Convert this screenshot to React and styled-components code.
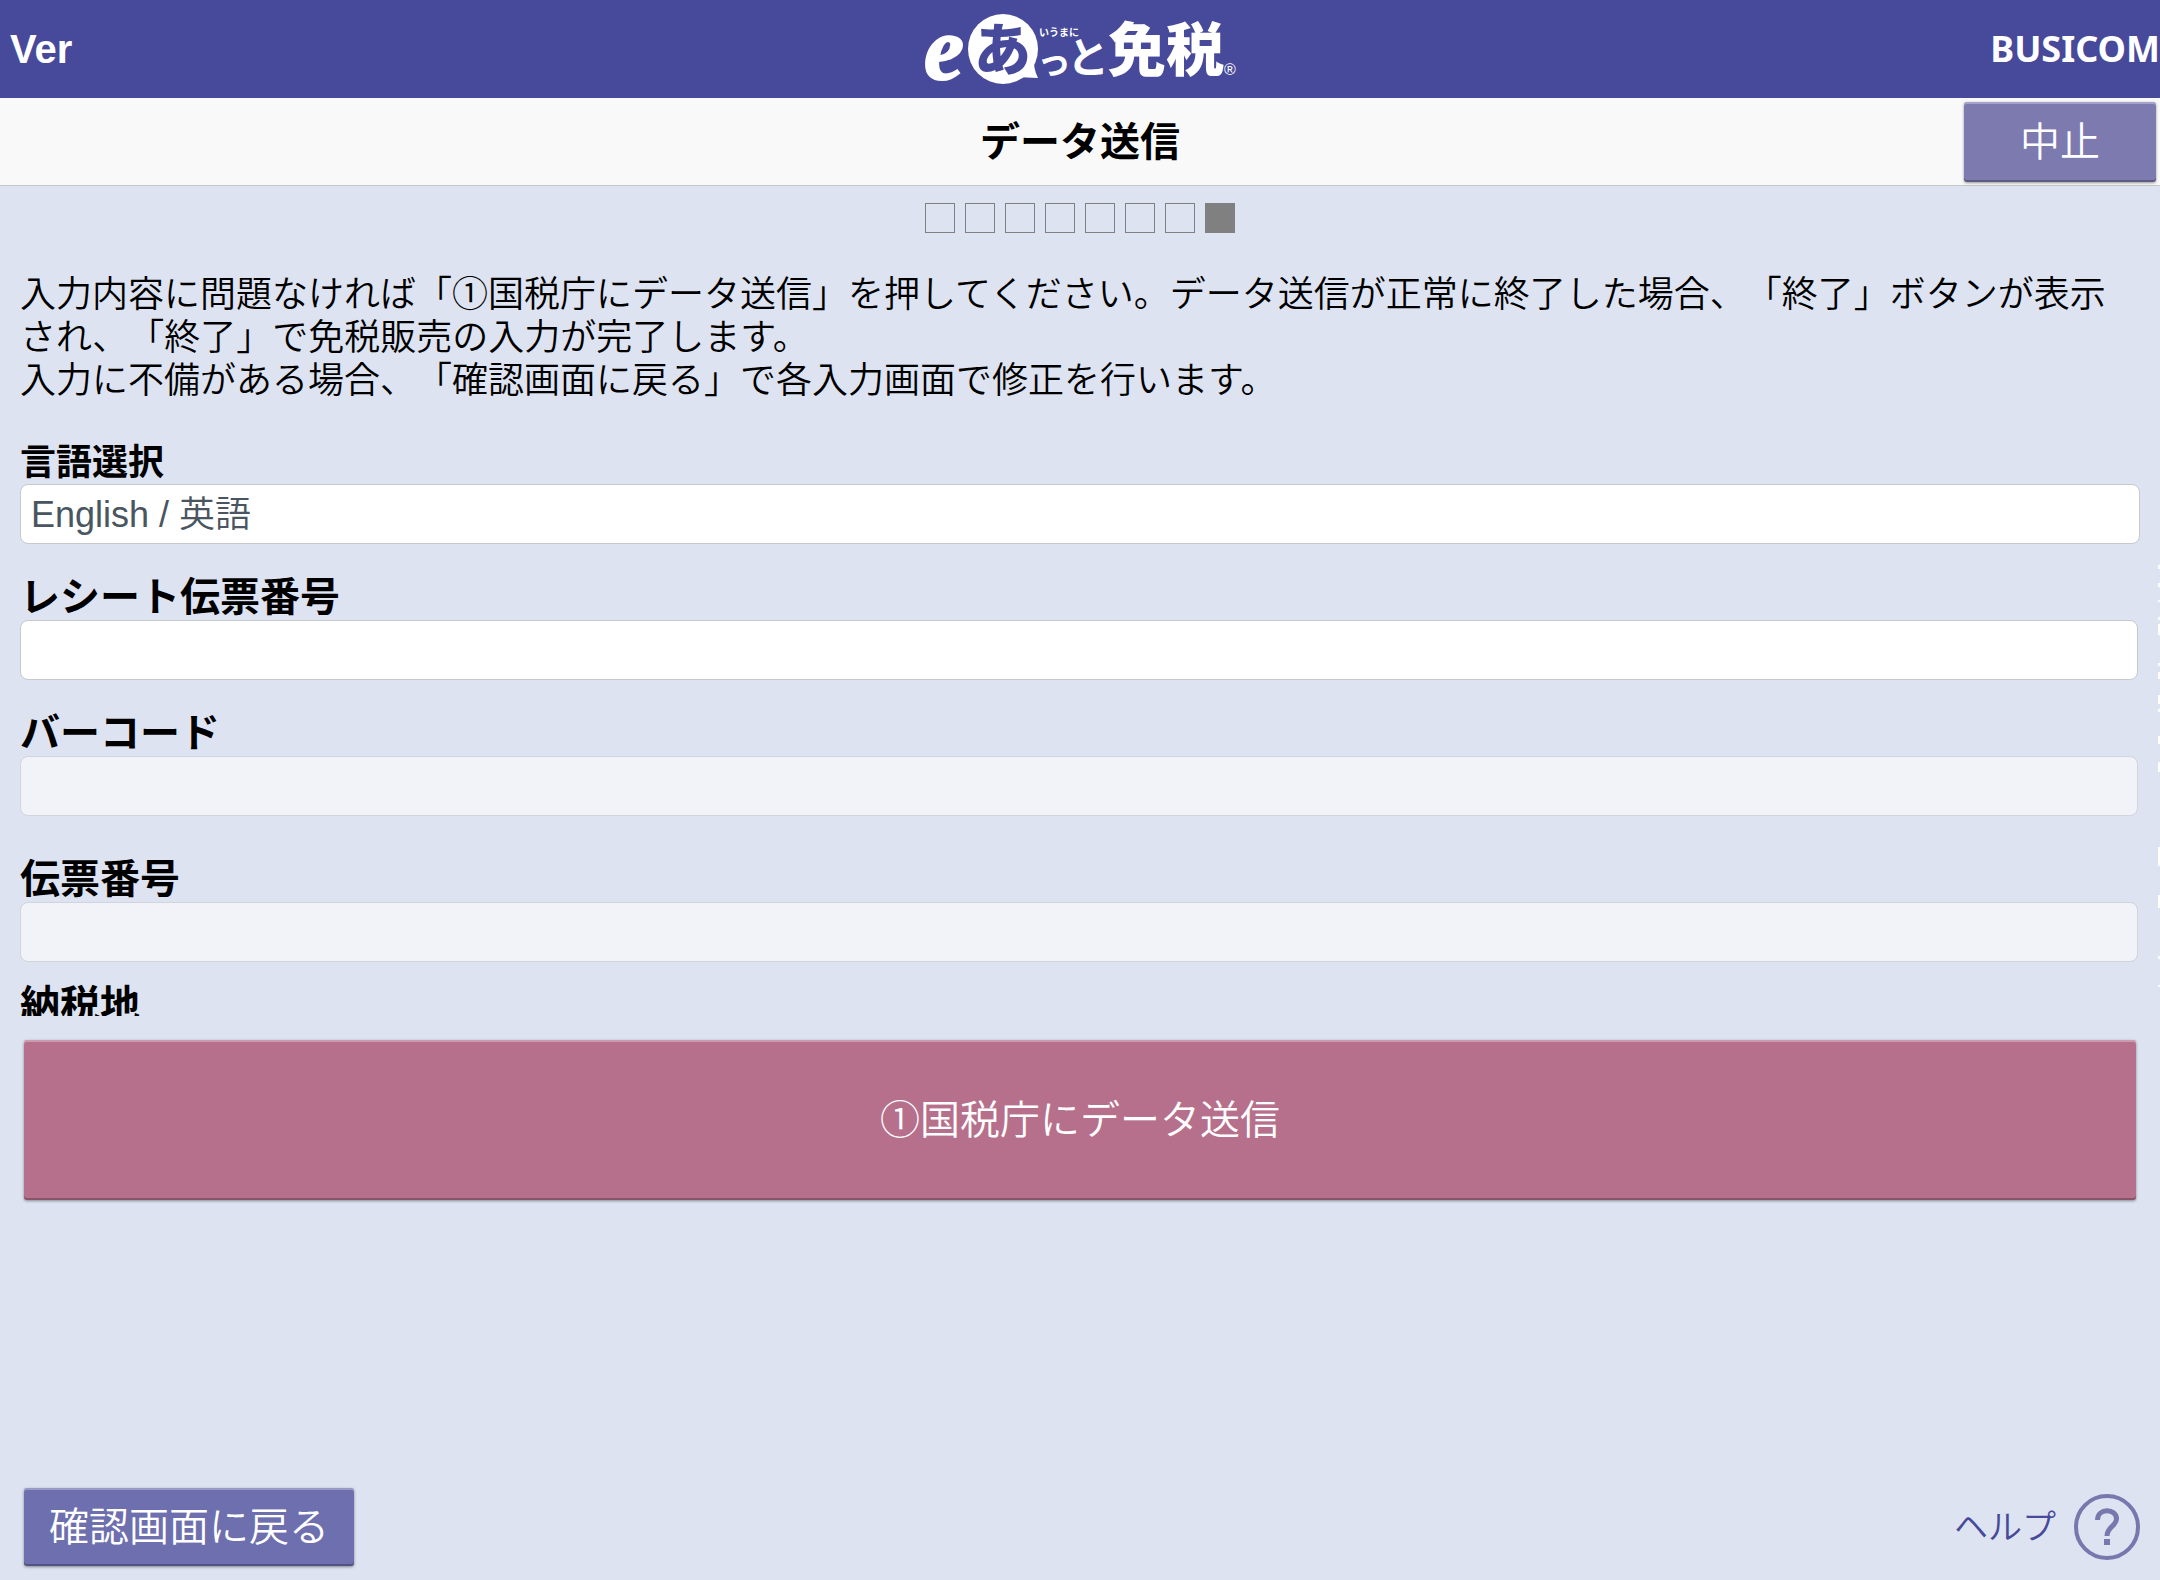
import React, { useState } from 'react';
import styled, { createGlobalStyle } from 'styled-components';

const STEPS = 8;

const App = () => {
    const [receiptNo, setReceiptNo] = useState('');

    return (
        <>
            <GlobalStyle />
            <Page>
                <Header>
                    <Version>Ver</Version>
                    <Logo />
                    <Brand>BUSICOM</Brand>
                </Header>

                <TitleBar>
                    <Title>データ送信</Title>
                    <CancelButton type="button">中止</CancelButton>
                </TitleBar>

                <Steps>
                    {Array.from({ length: STEPS }, (_, i) => (
                        <Step key={i} $current={i === STEPS - 1} />
                    ))}
                </Steps>

                <Main>
                    <Form>
                        <Message>
                            入力内容に問題なければ「①国税庁にデータ送信」を押してください。データ送信が正常に終了した場合、「終了」ボタンが表示され、「終了」で免税販売の入力が完了します。
                            <br />
                            入力に不備がある場合、「確認画面に戻る」で各入力画面で修正を行います。
                        </Message>

                        <Field>
                            <Label htmlFor="language" $small>言語選択</Label>
                            <Select id="language" defaultValue="en">
                                <option value="en">English / 英語</option>
                            </Select>
                        </Field>
                        <Field>
                            <Label htmlFor="receipt">レシート伝票番号</Label>
                            <Input id="receipt" value={receiptNo} onChange={(e) => setReceiptNo(e.target.value)} />
                        </Field>
                        <Field $space="40px">
                            <Label htmlFor="barcode">バーコード</Label>
                            <Input id="barcode" disabled />
                        </Field>
                        <Field $space="20px">
                            <Label htmlFor="slip">伝票番号</Label>
                            <Input id="slip" disabled />
                        </Field>
                        <Field>
                            <Label htmlFor="taxplace">納税地</Label>
                            <Input id="taxplace" disabled />
                        </Field>
                    </Form>

                    <SendButton type="button">①国税庁にデータ送信</SendButton>
                </Main>

                <Footer>
                    <BackButton type="button">確認画面に戻る</BackButton>
                    <HelpLink href="#help">
                        ヘルプ
                        <HelpIcon />
                    </HelpLink>
                </Footer>

                <EdgeMarks />
            </Page>
        </>
    );
};

export default App;

const Logo = () => (
    <LogoSvg viewBox="0 0 360 98" role="img" aria-label="eあっと免税">
        <g fill="#fff" fontFamily="'Noto Sans CJK JP', sans-serif" fontWeight="900">
            <text x="24" y="79" fontSize="90" fontWeight="bold" fontStyle="italic" fontFamily="'Liberation Serif', serif" stroke="#fff" strokeWidth="2">e</text>
            <circle cx="103" cy="49" r="35" />
            <path d="M134 57 Q133 68 138 78 L116 77 Z" />
            <text x="74" y="70" fontSize="57" fill="#47499a">あ</text>
            <text x="139" y="36" fontSize="10" fontWeight="700">いうまに</text>
            <text x="137" y="74" fontSize="34" fontWeight="700">っ</text>
            <text x="167" y="73" fontSize="42" fontWeight="700">と</text>
            <text x="208" y="71" fontSize="58">免税</text>
            <text x="324" y="75" fontSize="16" fontWeight="400" fontFamily="'Liberation Sans', sans-serif">®</text>
        </g>
    </LogoSvg>
);

const HelpIcon = () => (
    <HelpSvg viewBox="0 0 66 66" fill="none" stroke="#7877ae" aria-hidden="true">
        <circle cx="33" cy="33" r="31" strokeWidth="4" />
        <path d="M23.5 26 C23.5 13.5 42.5 14 42.5 25 C42.5 32 33 32.5 33 42" strokeWidth="5" />
        <path d="M33 45 V51" strokeWidth="6" />
    </HelpSvg>
);

const EdgeMarks = () => (
    <EdgeSvg viewBox="0 0 2 430" stroke="#fff" strokeWidth="2" aria-hidden="true">
        <path d="M1 10 V14 M1 28 V32 M1 45 V47 M1 62 V65 M1 69 V80 M1 108 V111 M1 117 V124 M1 140 V149 M1 154 V157 M1 181 V189 M1 207 V217 M1 292 V311 M1 340 V353 M1 401 V404 M1 430 V433" />
    </EdgeSvg>
);

const GlobalStyle = createGlobalStyle`
    * {
        box-sizing: border-box;
    }

    body {
        margin: 0;
        background: #dde3f0;
        color: #000;
        font-family: 'Liberation Sans', 'Noto Sans CJK JP', sans-serif;
        font-size: 36px;
        text-spacing-trim: space-all;
    }

    button, input, select {
        font-family: inherit;
    }
`

const Page = styled.div`
    position: relative;
    display: flex;
    flex-direction: column;
    min-height: 100vh;
    overflow: hidden;
`

const Header = styled.header`
    display: grid;
    grid-template-columns: 1fr auto 1fr;
    align-items: center;
    height: 98px;
    background: #47499a;
    color: #fff;
`

const Version = styled.span`
    padding-left: 10px;
    font-size: 40px;
    font-weight: bold;
`

const LogoSvg = styled.svg`
    width: 360px;
    height: 98px;
`

const Brand = styled.span`
    justify-self: end;
    font-family: 'Noto Sans', sans-serif;
    font-size: 36px;
    font-weight: bold;
    line-height: 40px;
`

const TitleBar = styled.div`
    display: grid;
    grid-template-columns: 1fr auto 1fr;
    align-items: center;
    height: 88px;
    padding: 0 4px;
    border-bottom: 1px solid #c4c6ca;
    background: #f9f9f9;
`

const Title = styled.h1`
    grid-column: 2;
    margin: 0;
    font-size: 40px;
    font-weight: bold;
    line-height: 48px;
`

const Button = styled.button`
    border: 0;
    border-radius: 3px;
    color: #fff;
    font-size: 40px;
    font-weight: 350;
    line-height: 48px;
    cursor: pointer;
    box-shadow: inset 0 2px 0 rgba(255, 255, 255, 0.3), inset 0 -2px 0 rgba(0, 0, 0, 0.25), 0 1px 3px rgba(0, 0, 0, 0.4);
`

const CancelButton = styled(Button)`
    justify-self: end;
    width: 192px;
    height: 80px;
    background: #7d7ab0;
`

const Steps = styled.div`
    display: flex;
    justify-content: center;
    gap: 10px;
    margin-top: 17px;
`

const Step = styled.span`
    width: 30px;
    height: 30px;
    border: 1px solid #808080;
    background: ${(props) => (props.$current ? '#808080' : 'transparent')};
`

const Main = styled.main`
    display: flex;
    flex-direction: column;
    gap: 24px;
    padding: 40px 20px 0;
`

// fields that do not fit are reached by scrolling inside this pane
const Form = styled.form`
    height: 47vh;
    overflow-y: auto;
    scrollbar-width: none;
`

const Message = styled.p`
    margin: 0 0 40px;
    font-weight: 350;
    line-height: 43px;
`

const Field = styled.div`
    display: flex;
    flex-direction: column;
    margin-bottom: ${(props) => props.$space || '30px'};
`

const Label = styled.label`
    font-size: ${(props) => (props.$small ? '36px' : '40px')};
    font-weight: bold;
    line-height: ${(props) => (props.$small ? '42px' : '46px')};
`

const Input = styled.input`
    width: calc(100% - 2px);
    height: 60px;
    padding: 0 10px;
    border: 1px solid #c8c9cc;
    border-radius: 8px;
    background: #fff;
    color: #495560;
    font-size: 36px;

    &:disabled {
        border-color: #d2d4dc;
        background: #f2f3f9;
    }
`

const Select = styled(Input).attrs({ as: 'select' })`
    width: 100%;
    appearance: none;
    font-weight: 350;
`

const SendButton = styled(Button)`
    height: 160px;
    margin: 0 4px;
    background: #b7708b;
`

const Footer = styled.footer`
    display: flex;
    align-items: center;
    justify-content: space-between;
    margin-top: auto;
    padding: 0 20px 14px 24px;
`

const BackButton = styled(Button)`
    height: 78px;
    padding: 0 25px;
    background: #6e6fae;
`

const HelpLink = styled.a`
    display: flex;
    align-items: center;
    gap: 18px;
    color: #47499a;
    font-size: 34px;
    font-weight: 350;
    line-height: 40px;
    text-decoration: none;
`

const HelpSvg = styled.svg`
    width: 66px;
    height: 66px;
`

const EdgeSvg = styled.svg`
    position: absolute;
    top: 553px;
    right: 0;
    width: 2px;
    height: 434px;
`
